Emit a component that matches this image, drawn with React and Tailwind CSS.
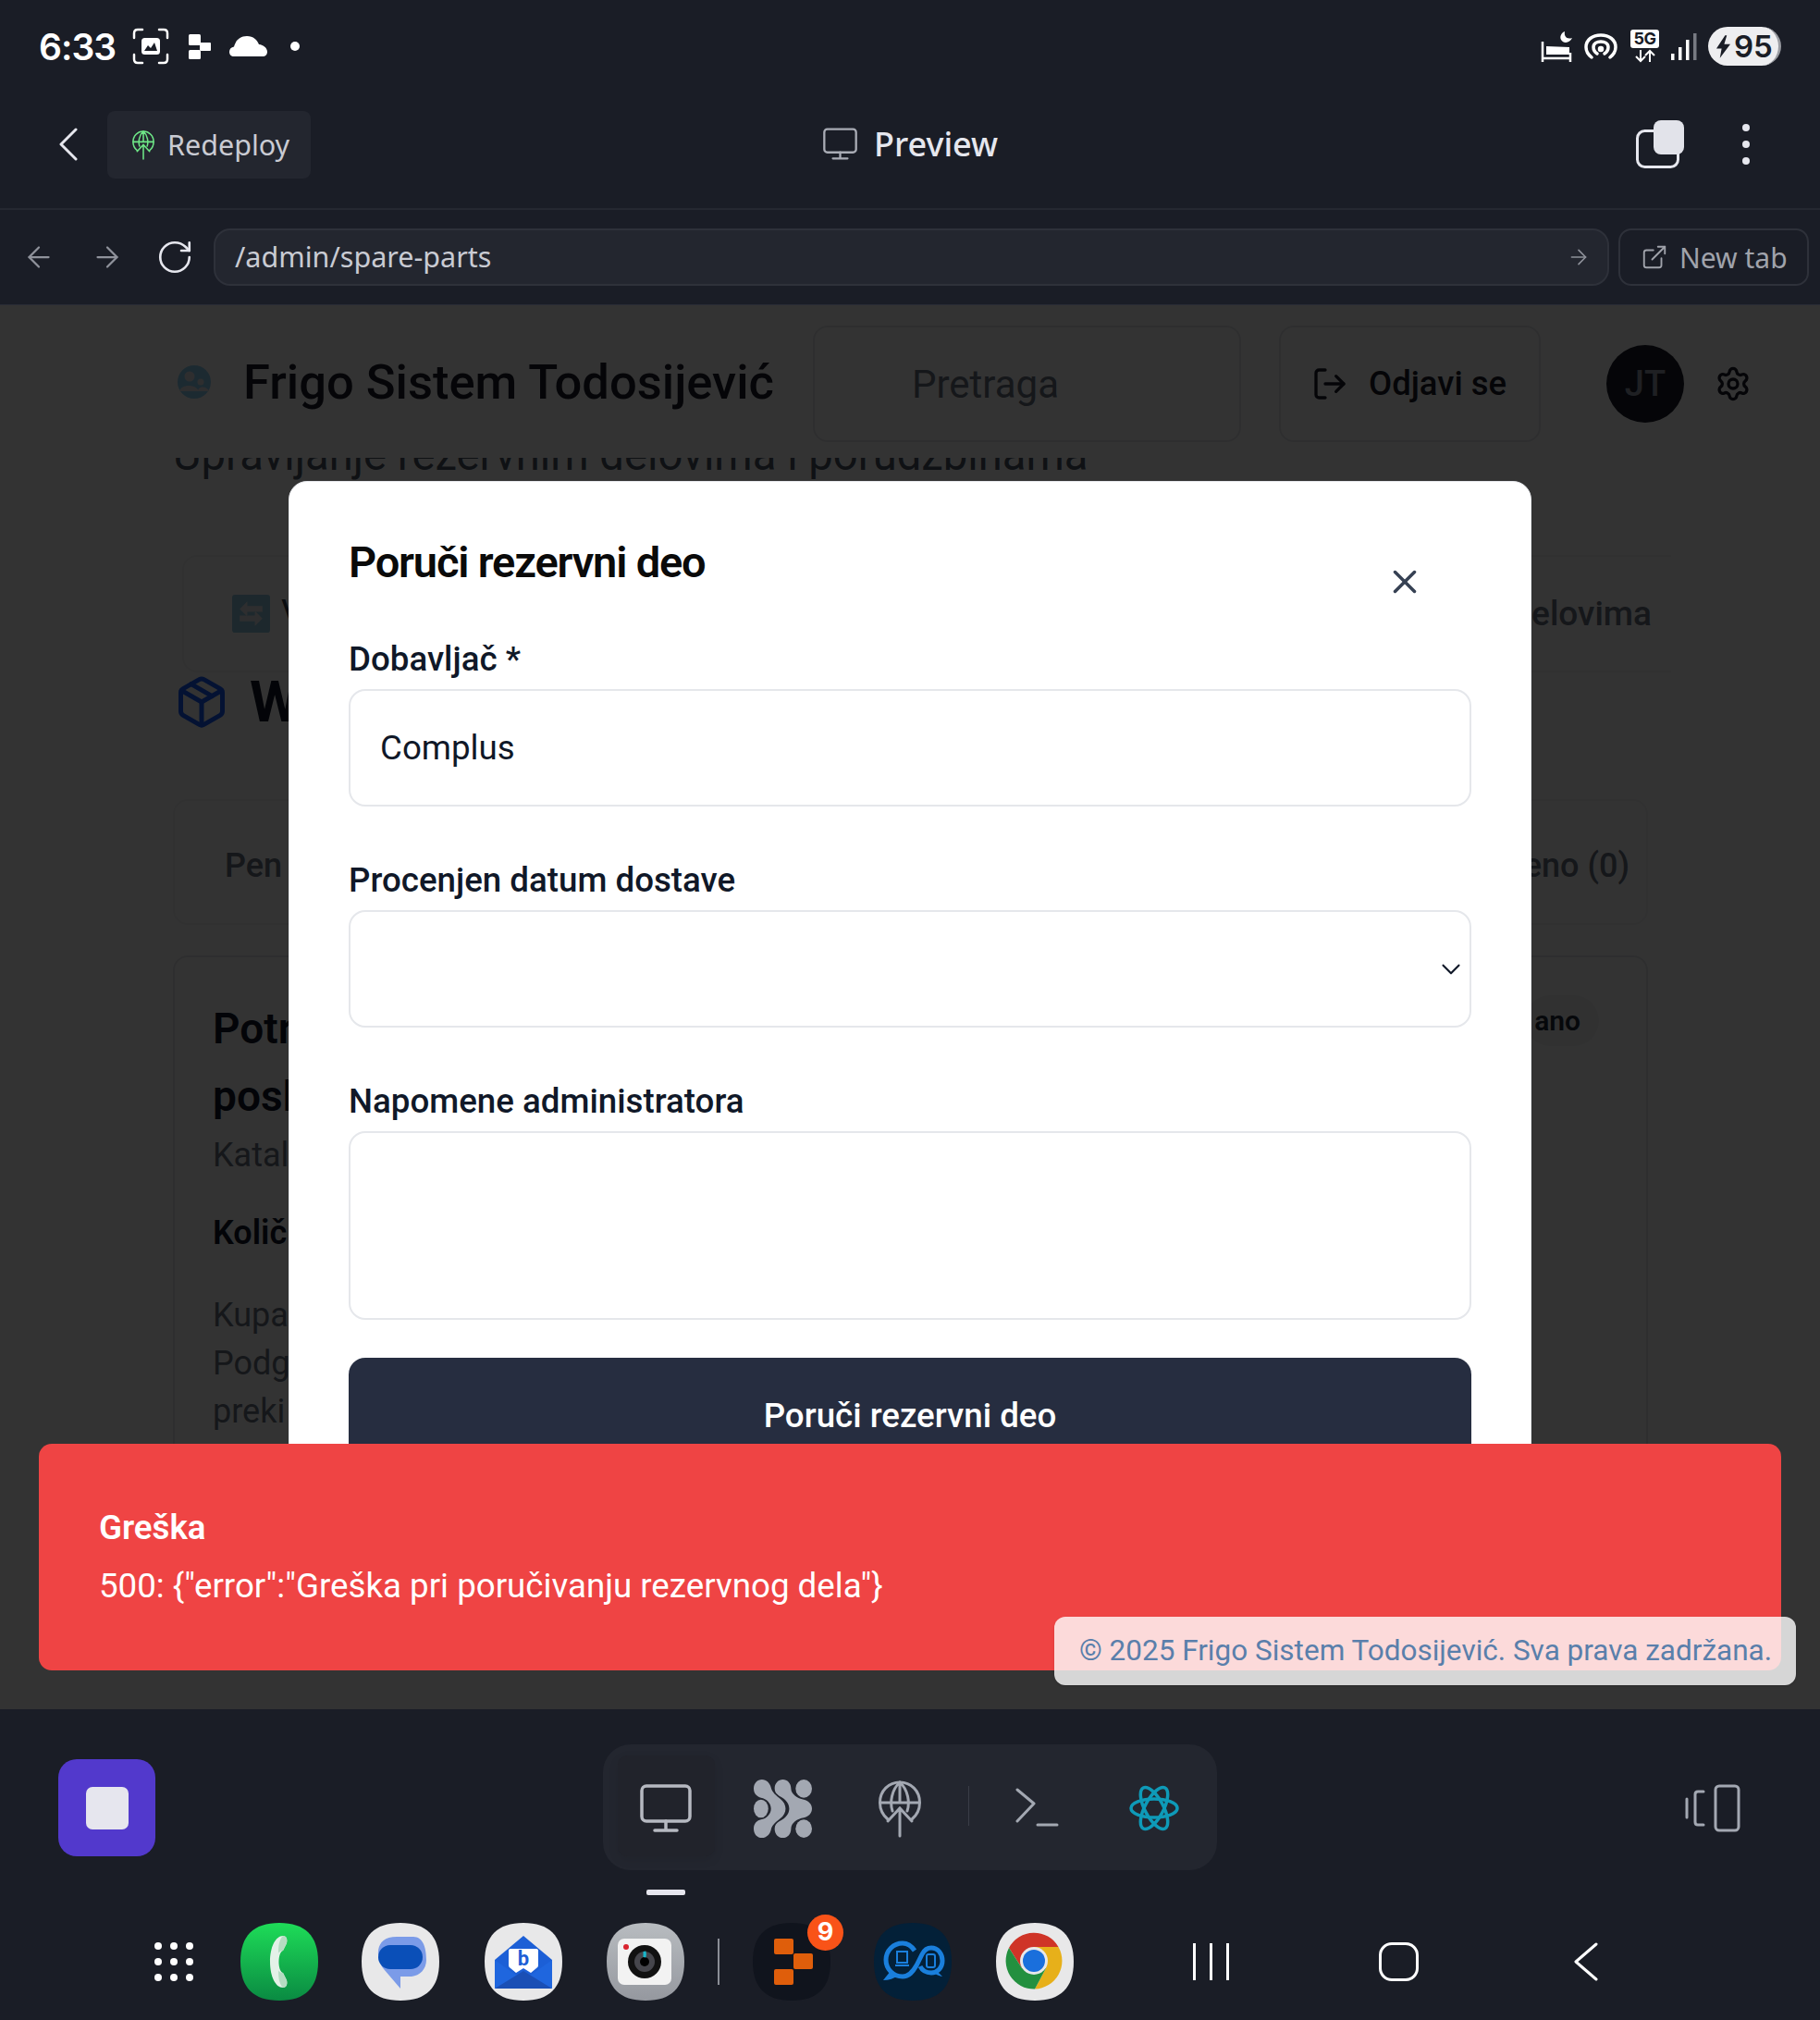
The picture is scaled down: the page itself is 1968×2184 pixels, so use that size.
import { ArrowLeft, ArrowRight, ChevronDown, ExternalLink, LogOut, Package, RotateCw, Settings, X } from "lucide-react";

const SQUIRCLE = "M42 0C70 0 84 14 84 42C84 70 70 84 42 84C14 84 0 70 0 42C0 14 14 0 42 0Z";

const MonitorIcon = ({ className }) => (
  <svg viewBox="0 0 56 52" fill="none" stroke="currentColor" strokeWidth="3.5" strokeLinecap="round" className={className}>
    <rect x="2" y="2" width="52" height="38" rx="5" />
    <path d="M28 40v9M16 50h24" />
  </svg>
);

const GlobeUpIcon = ({ className }) => (
  <svg viewBox="0 0 46 62" fill="none" stroke="currentColor" strokeWidth="3" strokeLinecap="round" className={className}>
    <path d="M10 42C4 37 1.500 31 1.500 24C1.500 11 11 2 23 2C35 2 44.500 11 44.500 24C44.500 31 42 37 36 42" />
    <path d="M15 33C12 24 14 10 23 2C32 10 34 24 31 33M23 2V24M2 24H44" />
    <path d="M23 60V30M10 44L23 30L36 44" />
  </svg>
);

const BlobsIcon = ({ className }) => (
  <svg viewBox="0 0 64 64" fill="#a3a8b2" className={className}>
    <ellipse cx="55" cy="10" rx="9" ry="10" />
    <ellipse cx="8" cy="32" rx="8" ry="10" />
    <ellipse cx="55" cy="54" rx="9" ry="10" />
    <path d="M23 10C23 4 27 0 32 0C37 0 41 4 41 10C41 16 48 21 55 22C60 23 64 27 64 32C64 37 60 41 55 42C48 43 41 48 41 54C41 60 37 64 32 64C27 64 23 60 23 54C23 50 25 48 28 46C36 42 39 37 39 32C39 27 36 22 28 18C25 16 23 14 23 10Z" />
    <path d="M9 0C14 0 18 4 19 9C20 14 25 18 29 21C33 24 35 28 35 32C35 36 33 40 29 43C25 46 20 50 19 55C18 60 14 64 9 64C4 64 0 60 0 54C0 48 4 45 8 44C14 43 19 38 19 32C19 26 14 21 8 20C4 19 0 16 0 10C0 4 4 0 9 0Z" />
  </svg>
);

const StatusLeft = () => (
  <div className="flex items-center">
    <span className="ml-[42px] w-[85px] text-[39px] leading-none font-semibold text-white font-['Inter',sans-serif] tracking-tight">6:33</span>
    <svg viewBox="0 0 40 40" className="ml-[16px] w-[40px] h-[40px]" fill="none" stroke="#fff" strokeWidth="2.500" strokeLinecap="round">
      <path d="M2 11V6Q2 2 6 2H11M29 2H34Q38 2 38 6V11M38 29V34Q38 38 34 38H29M11 38H6Q2 38 2 34V29" />
      <rect x="10" y="11" width="20" height="18" rx="3.500" fill="#fff" stroke="none" />
      <path d="M13 25L17 19L20 22L24 16L27 25Z" fill="#1a1d26" stroke="none" />
    </svg>
    <svg viewBox="0 0 24 27" fill="#fff" className="ml-[21px] w-[24px] h-[27px]">
      <rect x="0" y="0" width="13" height="12" rx="1.500" />
      <rect x="12" y="9" width="12" height="9" rx="1" />
      <rect x="0" y="17" width="13" height="10" rx="1.500" />
    </svg>
    <svg viewBox="0 0 41 22" fill="#fff" className="ml-[20px] w-[41px] h-[22px]">
      <path d="M5 22C2 22 0 20 0 17C0 14 2 12 5 11.500C7 4 12 0 19 0C26 0 30 4 32 9C37 9.500 41 13 41 17C41 20 39 22 36 22Z" />
    </svg>
    <span className="ml-[25px] w-[10px] h-[10px] rounded-full bg-white" />
  </div>
);

const StatusRight = () => (
  <div className="flex items-center">
    <svg viewBox="0 0 34 33" fill="none" stroke="#fff" className="w-[34px] h-[33px]">
      <path d="M2 11V33M32 23V33M2 29H32" strokeWidth="2.500" />
      <path d="M6 16L31 17V25H6Z" fill="#fff" stroke="none" />
      <path d="M26 0C25 5 28 9 34 7C32 12 25 14 22 9C20 5 23 1 26 0Z" fill="#fff" stroke="none" />
    </svg>
    <svg viewBox="0 0 36 28" fill="none" stroke="#fff" strokeWidth="3.500" strokeLinecap="round" className="ml-[13px] w-[36px] h-[28px]">
      <path d="M8 26C3 22 2 17 2 15C2 7 9 2 18 2C27 2 34 7 34 15C34 17 33 22 28 26" />
      <path d="M14 22C11 20 10 17 10 15C10 11 14 9 18 9C22 9 26 11 26 15C26 17 25 20 22 22" />
      <circle cx="18" cy="17" r="1.500" fill="#fff" />
    </svg>
    <div className="ml-[14px] w-[31px] h-[36px] flex flex-col items-center">
      <span className="w-[31px] h-[20px] rounded-[3px] bg-white text-[#1a1d26] text-[18px] leading-[20px] font-bold text-center tracking-tight font-['Inter',sans-serif]">5G</span>
      <svg viewBox="0 0 24 15" fill="none" stroke="#fff" strokeWidth="2" className="w-[24px] h-[15px] mt-[1px]">
        <path d="M7 1V13M2 8L7 13L12 8M17 14V2M12 7L17 2L22 7" />
      </svg>
    </div>
    <svg viewBox="0 0 28 29" className="ml-[13px] w-[28px] h-[29px]">
      <rect x="0" y="22" width="3.500" height="7" fill="#fff" />
      <rect x="8" y="15" width="3.500" height="14" fill="#fff" />
      <rect x="16" y="7" width="3.500" height="22" fill="#fff" />
      <rect x="24" y="0" width="3.500" height="29" fill="#777a82" />
    </svg>
    <div className="ml-[12px] w-[79px] h-[42px] rounded-[21px] bg-[#eeeef0] border-r-[3px] border-[#9a9ca2] flex items-center pl-[9px]">
      <svg viewBox="0 0 16 26" fill="#1a1d26" className="w-[15px] h-[25px]">
        <path d="M10 0L0 15H6L4 26L16 10H9L12 0Z" />
      </svg>
      <span className="ml-[4px] text-[33px] leading-none font-semibold text-[#1a1d26] font-['Inter',sans-serif]">95</span>
    </div>
  </div>
);

const TopChrome = () => (
  <div className="h-[330px] shrink-0 flex flex-col font-['Noto_Sans',sans-serif] border-b border-[#2a2d36]">
    <div className="h-[100px] flex items-center justify-between pr-[42px]">
      <StatusLeft />
      <StatusRight />
    </div>
    <div className="h-[127px] flex items-start border-b-2 border-[#252831] pt-[20px]">
      <svg viewBox="0 0 20 36" fill="none" stroke="#e6e7ee" strokeWidth="3" strokeLinecap="round" strokeLinejoin="round" className="ml-[64px] mt-[18px] w-[20px] h-[36px]">
        <path d="M18 2L2 18L18 34" />
      </svg>
      <div className="ml-[32px] w-[220px] h-[73px] rounded-[8px] bg-[#23262f] flex items-center pl-[27px]">
        <GlobeUpIcon className="w-[24px] h-[32px] text-[#6ee787]" />
        <span className="ml-[14px] text-[30.5px] text-[#c9cbd3]">Redeploy</span>
      </div>
      <MonitorIcon className="ml-[554px] mt-[18px] w-[37px] h-[35px] text-[#a9acb5]" />
      <span className="ml-[18px] mt-[10px] text-[36px] font-medium leading-[52px] text-[#e6e7ee]">Preview</span>
      <svg viewBox="0 0 52 52" className="ml-[690px] mt-[10px] w-[52px] h-[52px]">
        <rect x="1.500" y="11.500" width="44" height="39" rx="8" fill="none" stroke="#e6e7ee" strokeWidth="3" />
        <rect x="19" y="0" width="33" height="37" rx="8" fill="#e2e3ea" />
      </svg>
      <div className="ml-[63px] mt-[14px] flex flex-col gap-[10px]">
        <span className="w-[8px] h-[8px] rounded-full bg-[#e6e7ee]" />
        <span className="w-[8px] h-[8px] rounded-full bg-[#e6e7ee]" />
        <span className="w-[8px] h-[8px] rounded-full bg-[#e6e7ee]" />
      </div>
    </div>
    <div className="flex-1 flex items-center">
      <ArrowLeft strokeWidth={1.5} className="ml-[24px] w-[36px] h-[36px] text-[#8f929b]" />
      <ArrowRight strokeWidth={1.5} className="ml-[38px] w-[36px] h-[36px] text-[#8f929b]" />
      <RotateCw strokeWidth={1.5} className="ml-[34px] w-[42px] h-[42px] text-[#e6e7ee]" />
      <div className="ml-[21px] w-[1509px] h-[62px] rounded-[18px] bg-[#23262f] border-2 border-[#2e313a] flex items-center justify-between pl-[21px] pr-[18px]">
        <span className="text-[30.5px] text-[#c9cbd3]">/admin/spare-parts</span>
        <ArrowRight strokeWidth={1.5} className="w-[26px] h-[26px] text-[#8f929b]" />
      </div>
      <div className="ml-[10px] w-[206px] h-[62px] rounded-[14px] border-2 border-[#2e313a] flex items-center pl-[22px]">
        <ExternalLink strokeWidth={1.5} className="w-[30px] h-[30px] text-[#a0a3ab]" />
        <span className="ml-[12px] text-[30px] text-[#a0a3ab]">New tab</span>
      </div>
    </div>
  </div>
);

const BackgroundPage = () => (
  <div className="h-full bg-white text-[#1a1d2a]">
    <div className="h-[165px] flex items-center">
      <svg viewBox="0 0 40 40" className="ml-[190px] w-[40px] h-[40px] shrink-0">
        <circle cx="20" cy="20" r="18" fill="#8dd0f5" />
        <circle cx="15" cy="14" r="5.500" fill="#e5e7eb" />
        <path d="M4 30C6 22 22 22 25 30Z" fill="#e5e7eb" />
        <circle cx="27" cy="20" r="3.500" fill="#e5e7eb" />
        <path d="M24 30C24 24 34 24 36 30Z" fill="#e5e7eb" />
      </svg>
      <h1 className="ml-[33px] mt-[2px] w-[616px] text-[52.5px] leading-none font-medium whitespace-nowrap">Frigo Sistem Todosijević</h1>
      <div className="w-[463px] h-[126px] rounded-[16px] border-2 border-gray-200 flex items-center pl-[105px] text-[42px] text-gray-500 mt-[5px]">Pretraga</div>
      <div className="ml-[41px] w-[283px] h-[126px] rounded-[16px] border-2 border-gray-200 flex items-center pl-[33px] mt-[5px]">
        <LogOut className="w-[40px] h-[40px]" strokeWidth={2} />
        <span className="ml-[22px] text-[36.5px] font-medium">Odjavi se</span>
      </div>
      <div className="ml-[71px] w-[84px] h-[84px] rounded-full bg-[#1a1d2a] flex items-center justify-center text-[38px] font-medium text-gray-400 mt-[5px]">JT</div>
      <Settings className="ml-[33px] w-[40px] h-[40px] mt-[5px]" strokeWidth={2} />
    </div>
    <div className="h-[25px] overflow-hidden flex items-end pl-[187px]">
      <p className="text-[47.2px] leading-[56px] whitespace-nowrap text-gray-600">Upravljanje rezervnim delovima i porudžbinama</p>
    </div>
    <div className="ml-[197px] mt-[80px] w-[1610px] h-[127px] rounded-l-[16px] border-2 border-r-0 border-gray-100 flex items-center justify-between pl-[52px] pr-[21px]">
      <div className="flex items-center">
        <svg viewBox="0 0 40 40" className="w-[41px] h-[41px]">
          <rect width="40" height="40" rx="3" fill="#8fc8e0" />
          <path d="M8 15L16 7V12H32V18H16V23ZM32 25L24 17V22H8V28H24V33Z" fill="#e5e7eb" />
        </svg>
        <span className="ml-[12px] text-[38px] text-gray-700">V</span>
      </div>
      <span className="text-[37px] font-medium text-gray-500">elovima</span>
    </div>
    <div className="ml-[188px] mt-[2px] flex items-center h-[60px]">
      <Package className="w-[60px] h-[64px] text-blue-600" strokeWidth={2} />
      <span className="ml-[22px] text-[62px] font-bold leading-none text-gray-900">W</span>
    </div>
    <div className="ml-[187px] mt-[75px] w-[1595px] h-[136px] rounded-[16px] border-2 border-gray-100 flex items-center justify-between pl-[54px] pr-[18px] pt-[8px] text-[36px] font-medium text-gray-500">
      <span>Pen</span>
      <span>eno (0)</span>
    </div>
    <div className="ml-[187px] mt-[33px] w-[1595px] h-[700px] rounded-[16px] border-2 border-gray-200 pl-[41px] pt-[41px] pr-[51px]">
      <div className="flex justify-between items-start">
        <div className="text-[46px] leading-[73px] font-semibold text-gray-900">Potr<br />posl</div>
        <span className="mt-[0px] h-[55px] rounded-full bg-gray-100 pl-[10px] pr-[20px] flex items-center text-[30px] font-semibold text-gray-800">ano</span>
      </div>
      <div className="mt-[1px] text-[36px] leading-[52px] text-gray-500">Katal</div>
      <div className="mt-[32px] text-[36px] leading-[52px] font-semibold text-gray-900">Količ</div>
      <div className="mt-[37px] text-[36px] leading-[52px] text-gray-500">Kupa<br />Podg<br />preki</div>
    </div>
  </div>
);

const Field = ({ label, children }) => (
  <div className="mb-[63px]">
    <label className="block text-[36.7px] leading-[34px] font-medium text-gray-900 mb-[15px]">{label}</label>
    {children}
  </div>
);

const OrderModal = () => (
  <div className="absolute left-[312px] top-[190px] w-[1344px] h-[1200px] rounded-[20px] bg-white border border-gray-200 px-[64px] pt-[59px]">
    <h2 className="text-[47px] leading-[56px] font-semibold tracking-tight text-[#0a0a0a] mb-[60px]">Poruči rezervni deo</h2>
    <X className="absolute left-[1185px] top-[87px] w-[42px] h-[42px] text-gray-700" strokeWidth={2} />
    <Field label="Dobavljač *">
      <input
        readOnly
        value="Complus"
        className="w-full h-[127px] rounded-[18px] border-2 border-gray-200 px-[32px] text-[36.7px] text-gray-900 outline-none"
      />
    </Field>
    <Field label="Procenjen datum dostave">
      <div className="w-full h-[127px] rounded-[18px] border-2 border-gray-200 flex items-center justify-end pr-[3px]">
        <ChevronDown className="w-[34px] h-[34px] text-gray-900" strokeWidth={1.5} />
      </div>
    </Field>
    <div className="mb-[41px]">
      <label className="block text-[36.7px] leading-[34px] font-medium text-gray-900 mb-[15px]">Napomene administratora</label>
      <div className="w-full h-[204px] rounded-[18px] border-2 border-gray-200" />
    </div>
    <button className="w-full h-[125px] rounded-[18px] bg-[#262d40] text-[36.7px] font-medium text-white">Poruči rezervni deo</button>
  </div>
);

const ErrorToast = () => (
  <div className="absolute left-[42px] top-[1231px] w-[1884px] h-[245px] rounded-[14px] bg-[#ef4444] text-white flex flex-col justify-center pl-[65px]">
    <div className="text-[36.7px] leading-[44px] font-semibold">Greška</div>
    <div className="mt-[19px] text-[36.7px] leading-[44px]">500: {"{"}"error":"Greška pri poručivanju rezervnog dela"{"}"}</div>
  </div>
);

const PhoneApp = () => (
  <svg viewBox="0 0 84 84" className="w-[84px] h-[84px]">
    <defs>
      <linearGradient id="phoneBg" x1="0" y1="0" x2="0" y2="1">
        <stop offset="0" stopColor="#1edc58" />
        <stop offset="1" stopColor="#0a8a42" />
      </linearGradient>
    </defs>
    <path d={SQUIRCLE} fill="url(#phoneBg)" />
    <path d="M46 14C38 14 32 26 32 42C32 58 38 70 46 70C50 70 51 66 50 62L46 54C40 52 40 32 46 30L50 22C51 18 50 14 46 14Z" fill="#e4f1e8" />
    <path d="M46 14C50 14 51 18 50 22L46 30C43 30 41 32 41 33C41 24 42 18 46 14Z" fill="#b5dcc2" />
    <path d="M46 70C50 70 51 66 50 62L46 54C43 54 41 52 41 51C41 60 42 66 46 70Z" fill="#b5dcc2" />
  </svg>
);

const MessagesApp = () => (
  <svg viewBox="0 0 84 84" className="w-[84px] h-[84px]">
    <path d={SQUIRCLE} fill="#e8e8e9" />
    <path d="M38 15H56C66 15 70 26 70 40C70 50 63 57 54 58H42V71L24 50C16 40 12 15 38 15Z" fill="#7b9be8" />
    <rect x="18" y="24" width="48" height="26" rx="13" fill="#0a4fb8" />
  </svg>
);

const MailApp = () => (
  <svg viewBox="0 0 84 84" className="w-[84px] h-[84px]">
    <path d={SQUIRCLE} fill="#e8e8e9" />
    <path d="M11 40L42 14L73 40V70Q73 71 71 71H13Q11 71 11 70Z" fill="#1c5fd6" />
    <path d="M11 40L42 62L73 40V70Q73 71 71 71H13Q11 71 11 70Z" fill="#1f66de" />
    <path d="M11 71L42 52L73 71Z" fill="#1a4fb5" />
    <path d="M26 30Q26 28 28 28H56Q58 28 58 30V46Q58 48 56 49L50 54L42 49L34 54L28 49Q26 48 26 46Z" fill="#fff" />
    <text x="42" y="46" textAnchor="middle" fontSize="22" fontWeight="700" fill="#1c5fd6" fontFamily="Roboto, sans-serif">b</text>
  </svg>
);

const CameraApp = () => (
  <svg viewBox="0 0 84 84" className="w-[84px] h-[84px]">
    <defs>
      <linearGradient id="camBg" x1="0" y1="0" x2="0" y2="1">
        <stop offset="0" stopColor="#b8bcc0" />
        <stop offset="1" stopColor="#95989f" />
      </linearGradient>
    </defs>
    <path d={SQUIRCLE} fill="url(#camBg)" />
    <rect x="12" y="17" width="58" height="50" rx="7" fill="#f2f2f2" />
    <circle cx="21" cy="26" r="3" fill="#d9232e" />
    <circle cx="41" cy="42" r="18" fill="#111" />
    <circle cx="41" cy="42" r="11" fill="#46464c" />
    <circle cx="41" cy="42" r="5" fill="#000" />
    <path d="M41 31A11 11 0 0 1 41 37Z" fill="#19b6c9" stroke="#19b6c9" strokeWidth="3" />
  </svg>
);

const OrangeApp = () => (
  <div className="relative w-[84px] h-[84px]">
    <svg viewBox="0 0 84 84" className="w-[84px] h-[84px]">
      <path d={SQUIRCLE} fill="#10141d" />
      <rect x="23" y="17" width="21" height="17" rx="2" fill="#df5e0b" />
      <rect x="44" y="33" width="21" height="17" rx="2" fill="#df5e0b" />
      <rect x="23" y="50" width="21" height="17" rx="2" fill="#df5e0b" />
    </svg>
    <span className="absolute left-[59px] top-[-9px] w-[39px] h-[39px] rounded-full bg-[#f95318] text-white text-[27px] font-bold flex items-center justify-center font-['Inter',sans-serif]">9</span>
  </div>
);

const SyncApp = () => (
  <svg viewBox="0 0 84 84" className="w-[84px] h-[84px]">
    <path d={SQUIRCLE} fill="#032038" />
    <g fill="none" stroke="#1a7fdc" strokeWidth="5">
      <path d="M44 30C40 24 35 22 31 22C21 22 13 30 13 40C13 50 21 58 31 58C38 58 42 53 46 46L52 34C54 30 58 27 62 27C69 27 74 33 74 41C74 49 68 54 62 54C56 54 52 51 50 47" />
    </g>
    <path d="M18 52L10 62C16 62 22 60 26 57Z" fill="#1a7fdc" />
    <path d="M68 52L74 58C72 58 68 56 64 54Z" fill="#1a7fdc" />
    <path d="M25 31H36V43H25ZM23 46H38" fill="none" stroke="#1a7fdc" strokeWidth="2" />
    <rect x="57" y="34" width="9" height="14" rx="2" fill="none" stroke="#1a7fdc" strokeWidth="2" />
  </svg>
);

const ChromeApp = () => (
  <svg viewBox="0 0 84 84" className="w-[84px] h-[84px]">
    <path d={SQUIRCLE} fill="#e8e8e9" />
    <g transform="translate(41 41)">
      <path d="M-27-14A30.500 30.500 0 0 1 26.500-15L0-15L-13 8Z" fill="#cf3427" />
      <path d="M26.500-15A30.500 30.500 0 0 1 1 30.500L13 8L0-15Z" fill="#e7b01a" />
      <path d="M1 30.500A30.500 30.500 0 0 1-27-14L-13 8L13 8Z" fill="#23903f" />
      <circle r="15" fill="#e8e8e9" />
      <circle r="12" fill="#1a6fdc" />
    </g>
  </svg>
);

const BottomBar = () => (
  <div className="flex-1 flex flex-col">
    <div className="h-[195px] flex items-start">
      <div className="ml-[63px] mt-[54px] w-[105px] h-[105px] rounded-[20px] bg-[#5239cc] flex items-center justify-center">
        <span className="w-[46px] h-[46px] rounded-[7px] bg-[#e6e6ee]" />
      </div>
      <div className="relative ml-[484px] mt-[38px] w-[664px] h-[136px] rounded-[30px] bg-[#23262f] flex items-center">
        <div className="absolute left-[16px] top-[12px] w-[105px] h-[109px] rounded-[10px] bg-[#21232b] shadow-[0_4px_12px_rgba(0,0,0,0.08)]" />
        <MonitorIcon className="relative ml-[40px] mt-[2px] w-[56px] h-[52px] text-[#b6b9c1]" />
        <BlobsIcon className="relative ml-[67px] mt-[2px] w-[63px] h-[63px]" />
        <GlobeUpIcon className="ml-[72px] mt-[4px] w-[46px] h-[62px] text-[#a3a8b2]" />
        <span className="ml-[51px] mt-[-3px] w-[1px] h-[43px] bg-[#3a3d47]" />
        <svg viewBox="0 0 47 42" fill="none" stroke="#a3a8b2" strokeWidth="3" strokeLinecap="round" strokeLinejoin="round" className="ml-[50px] mt-[0px] w-[47px] h-[42px]">
          <path d="M2 2L20 17L2 36M24 40H45" />
        </svg>
        <svg viewBox="0 0 54 50" fill="none" stroke="#0e9ab8" strokeWidth="3.500" className="ml-[76px] mt-[2px] w-[54px] h-[50px]">
          <ellipse cx="27" cy="25" rx="25" ry="10" />
          <ellipse cx="27" cy="25" rx="25" ry="10" transform="rotate(62 27 25)" />
          <ellipse cx="27" cy="25" rx="25" ry="10" transform="rotate(-62 27 25)" />
        </svg>
      </div>
      <svg viewBox="0 0 60 52" fill="none" stroke="#a3a8b2" strokeWidth="3" strokeLinecap="round" className="ml-[506px] mt-[81px] w-[60px] h-[52px]">
        <path d="M2 16V36" />
        <path d="M20 8H14Q11 8 11 11V41Q11 44 14 44H20" />
        <rect x="33" y="2" width="25" height="48" rx="4" />
      </svg>
    </div>
    <span className="ml-[699px] w-[42px] h-[6px] rounded-[2px] bg-[#e6e6ee]" />
    <div className="mt-[30px] flex items-center h-[84px]">
      <div className="ml-[167px] grid grid-cols-3 gap-x-[9px] gap-y-[9px]">
        {Array.from({ length: 9 }).map((_, i) => (
          <span key={i} className="w-[8px] h-[8px] rounded-full bg-white" />
        ))}
      </div>
      <div className="ml-[51px]"><PhoneApp /></div>
      <div className="ml-[47px]"><MessagesApp /></div>
      <div className="ml-[49px]"><MailApp /></div>
      <div className="ml-[48px]"><CameraApp /></div>
      <span className="ml-[36px] w-[2px] h-[50px] bg-[#8b8e96]" />
      <div className="ml-[36px]"><OrangeApp /></div>
      <div className="ml-[47px]"><SyncApp /></div>
      <div className="ml-[48px]"><ChromeApp /></div>
      <div className="ml-[129px] flex gap-[15px] h-[40px]">
        <span className="w-[3px] h-full bg-white" />
        <span className="w-[3px] h-full bg-white" />
        <span className="w-[3px] h-full bg-white" />
      </div>
      <span className="ml-[162px] w-[43px] h-[42px] rounded-[14px] border-[3px] border-white" />
      <svg viewBox="0 0 26 42" fill="none" stroke="#fff" strokeWidth="3" strokeLinecap="round" strokeLinejoin="round" className="ml-[168px] w-[26px] h-[42px]">
        <path d="M24 2L2 21L24 40" />
      </svg>
    </div>
  </div>
);

const App = () => {
  return (
    <div className="w-[1968px] h-[2184px] flex flex-col overflow-hidden bg-[#1a1d26] font-['Roboto',sans-serif]">
      <TopChrome />
      <div className="relative h-[1518px] shrink-0 overflow-hidden">
        <BackgroundPage />
        <div className="absolute inset-0 bg-black/80" />
        <OrderModal />
        <ErrorToast />
        <div className="absolute left-[1140px] top-[1418px] w-[802px] h-[74px] rounded-[12px] bg-white/80 flex items-center pl-[27px] text-[31.5px] text-[#5a7fab] shadow-sm whitespace-nowrap">
          © 2025 Frigo Sistem Todosijević. Sva prava zadržana.
        </div>
      </div>
      <BottomBar />
    </div>
  );
};

export default App;
